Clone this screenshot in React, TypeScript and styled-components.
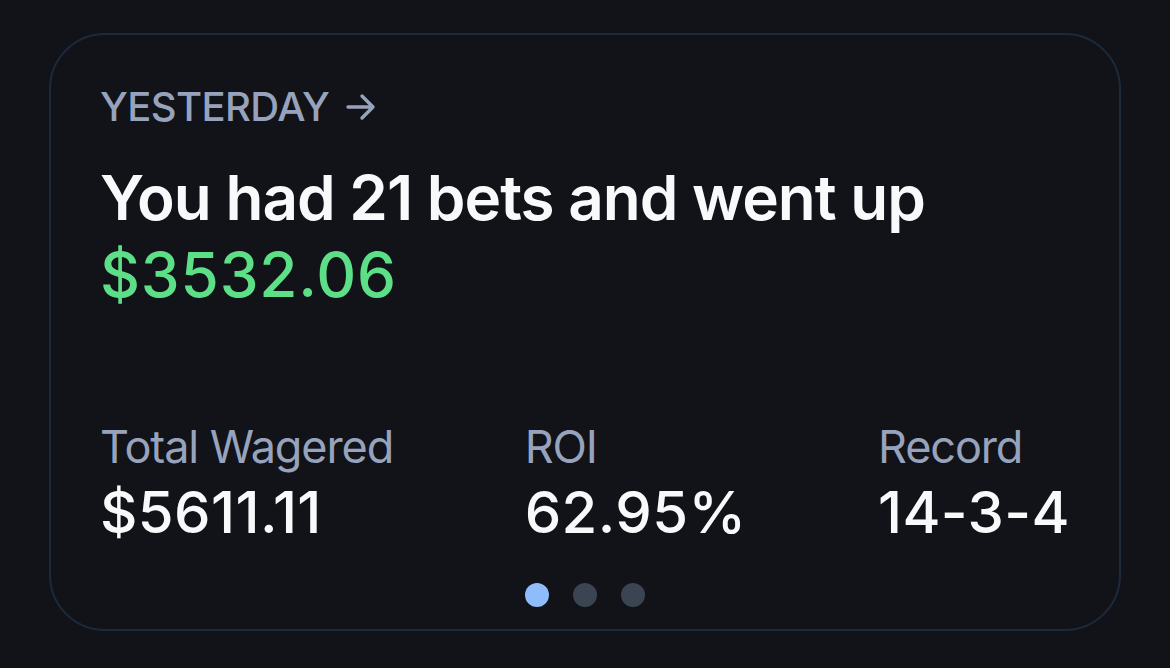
import styled, { createGlobalStyle } from 'styled-components'

const GlobalStyle = createGlobalStyle`
  html, body {
    margin: 0;
    padding: 0;
    background-color: #111318;
  }
  body {
    font-family: Inter, "Noto Sans", "Liberation Sans", sans-serif;
    -webkit-font-smoothing: antialiased;
  }
`

const Page = styled.div`
  width: 1170px;
  height: 668px;
  padding: 33px 49px 37px 49px;
  box-sizing: border-box;
`

const Card = styled.div`
  width: 100%;
  height: 100%;
  box-sizing: border-box;
  border: 2px solid #1d2a3c;
  border-radius: 56px;
  padding: 48px 49px 0 49px;
  display: flex;
  flex-direction: column;
`

const Eyebrow = styled.div`
  display: flex;
  align-items: center;
  gap: 16px;
  color: #97a3bc;
  font-size: 40px;
  font-weight: 500;
  line-height: 48px;
  letter-spacing: -0.6px;
`

const Heading = styled.h1`
  margin: 28px 0 0 0;
  color: #f8f9fb;
  font-size: 62px;
  font-weight: 600;
  line-height: 77px;
  letter-spacing: -1px;
`

const Amount = styled.span`
  display: block;
  color: #5ddf88;
  font-weight: 500;
  letter-spacing: 0.8px;
`

const Stats = styled.div`
  display: flex;
  justify-content: space-between;
  margin-top: 107px;
`

const Stat = styled.div`
  display: flex;
  flex-direction: column;
`

const StatLabel = styled.div`
  color: #97a3bc;
  font-size: 45px;
  font-weight: 400;
  line-height: 54px;
  letter-spacing: -1.1px;
`

const StatValue = styled.div`
  margin-top: 3px;
  color: #f8f9fb;
  font-size: 58px;
  font-weight: 500;
  line-height: 70px;
  letter-spacing: 0.4px;
`

const Dots = styled.div`
  display: flex;
  justify-content: center;
  gap: 24px;
  margin-top: 36px;
`

const Dot = styled.span<{ $active?: boolean }>`
  width: 24px;
  height: 24px;
  border-radius: 50%;
  background-color: ${({ $active }) => ($active ? '#8fbcfb' : '#3a4452')};
`

const stats = [
  { label: 'Total Wagered', value: '$5611.11' },
  { label: 'ROI', value: '62.95%' },
  { label: 'Record', value: '14-3-4' },
]

const App = (): JSX.Element => {
  return (
    <>
      <GlobalStyle />
      <Page>
        <Card>
          <Eyebrow>
            YESTERDAY
            <svg width="32" height="28" viewBox="0 0 32 28" fill="none" stroke="#97a3bc" strokeWidth="3.4" strokeLinecap="round" strokeLinejoin="round">
              <path d="M3 14h25M17 3l11 11-11 11" />
            </svg>
          </Eyebrow>
          <Heading>
            You had 21 bets and went up
            <Amount>$3532.06</Amount>
          </Heading>
          <Stats>
            {stats.map(({ label, value }) => (
              <Stat key={label}>
                <StatLabel>{label}</StatLabel>
                <StatValue>{value}</StatValue>
              </Stat>
            ))}
          </Stats>
          <Dots>
            <Dot $active />
            <Dot />
            <Dot />
          </Dots>
        </Card>
      </Page>
    </>
  )
}

export default App
